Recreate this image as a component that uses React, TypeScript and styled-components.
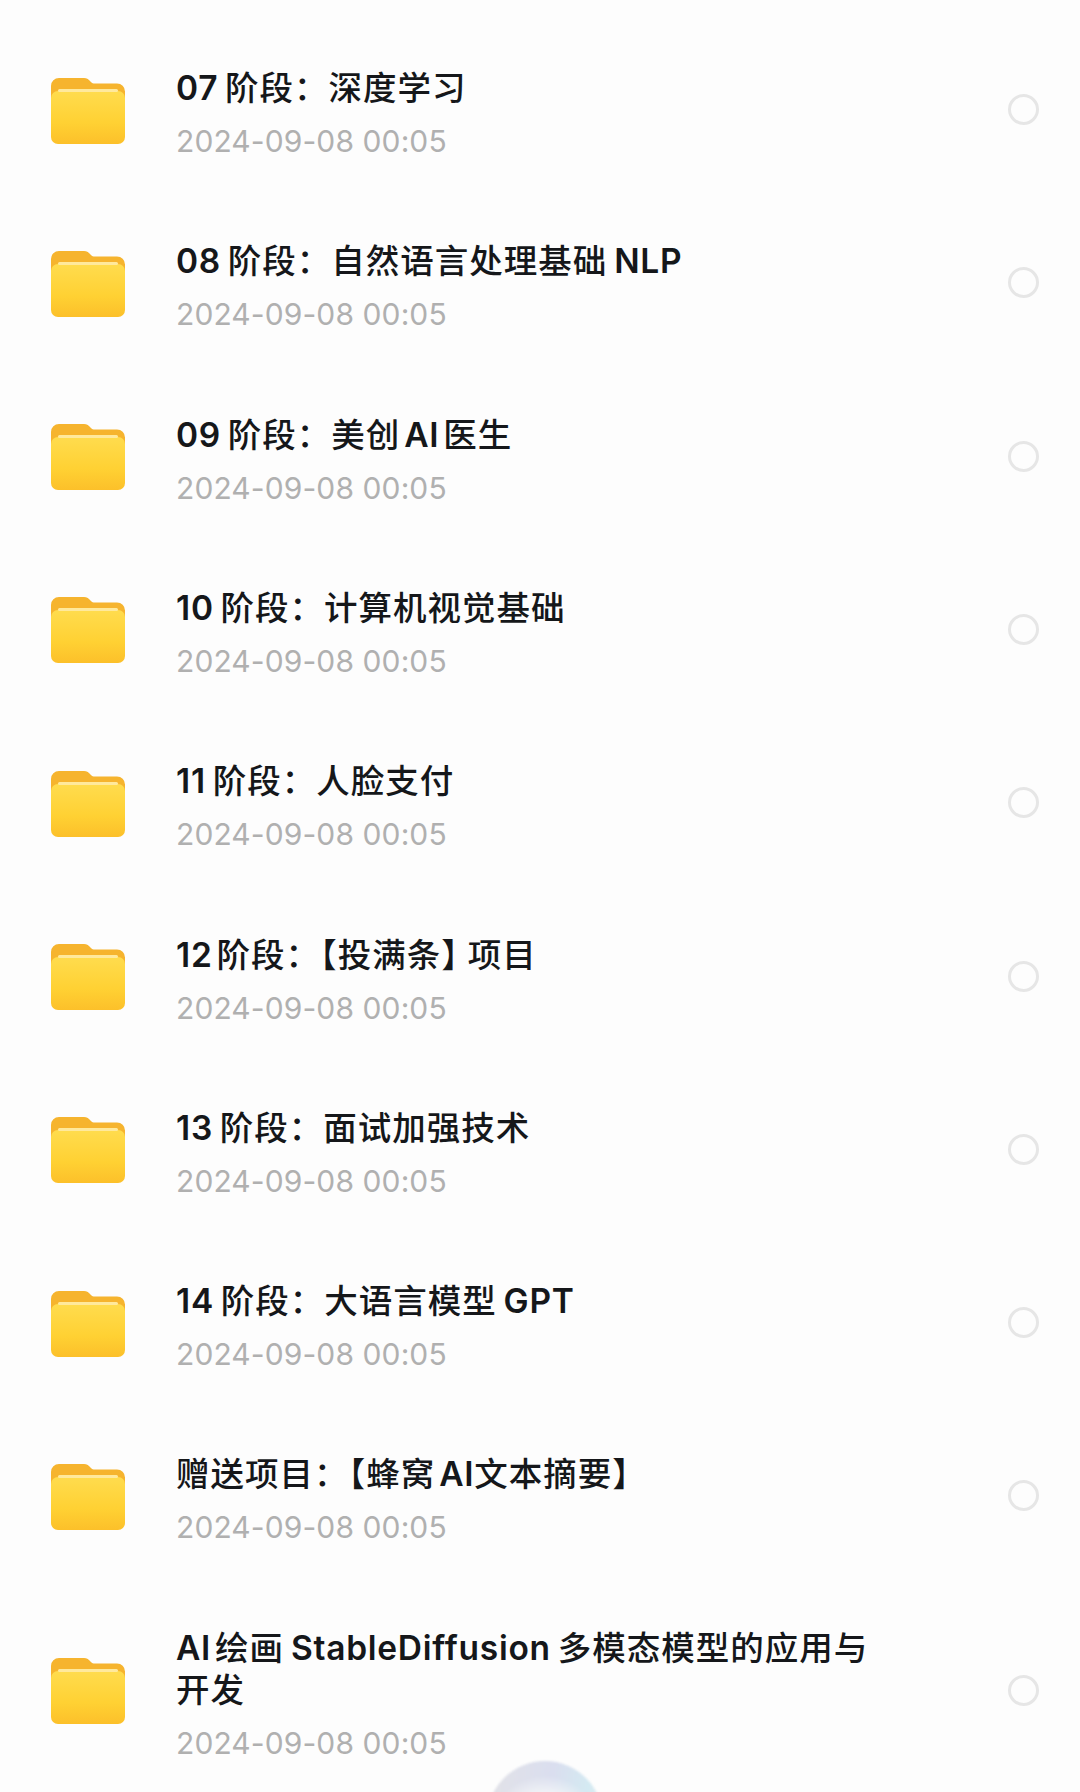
import React, { useId } from 'react';
import { createGlobalStyle, styled } from 'styled-components';

const GlobalStyle = createGlobalStyle`
  html, body {
    margin: 0;
    padding: 0;
    background: #fdfdfd;
  }
`;

const Page = styled.div`
  position: relative;
  width: 1080px;
  height: 1792px;
  overflow: hidden;
  padding-top: 23px;
  box-sizing: border-box;
  background: #fdfdfd;
  font-family: Inter, "Noto Sans CJK SC", sans-serif;
`;

const Row = styled.div`
  display: flex;
  align-items: center;
  padding: 37.15px 41px 37.15px 51px;
`;

const FolderSvg = styled.svg`
  flex: none;
  width: 74px;
  height: 66px;
  margin: 2px 51px 0 0;
`;

const Info = styled.div`
  flex: 1;
  padding-top: 7px;
`;

const Title = styled.div`
  font-size: 33.5px;
  line-height: 42px;
  font-weight: 500;
  letter-spacing: 1px;
  color: #15171a;
`;

const Latin = styled.span`
  font-weight: 600;
  letter-spacing: 0.75px;
`;

const CloseBracket = styled.span`
  letter-spacing: -7px;
`;

const Time = styled.div`
  margin-top: 14px;
  font-size: 30px;
  line-height: 36px;
  letter-spacing: 0.1px;
  color: #b0b0b0;
`;

const Radio = styled.div`
  flex: none;
  width: 25px;
  height: 25px;
  border: 3px solid #e6e6e6;
  border-radius: 50%;
`;

const FloatBall = styled.div`
  position: absolute;
  left: 487px;
  top: 1761px;
  width: 116px;
  height: 116px;
  border-radius: 50%;
  background:
    radial-gradient(circle at 50% 62%, #f6f8f9 0 38%, transparent 62%),
    linear-gradient(100deg, #e3e3e7 0%, #dadeef 50%, #d4eaf2 78%, #e8ecee 100%);
  filter: blur(1px);
`;

const Folder: React.FC = () => {
  const id = useId();
  return (
    <FolderSvg viewBox="0 0 74 66">
      <defs>
        <linearGradient id={id} x1="0" y1="0" x2="0" y2="1">
          <stop offset="0" stopColor="#ffdc4e" />
          <stop offset="0.6" stopColor="#ffd133" />
          <stop offset="1" stopColor="#fcc02a" />
        </linearGradient>
      </defs>
      <path
        d="M0 8a8 8 0 0 1 8-8h25c3 0 4 1 5.500 2.500l1.500 1.500c1 1 2 1.500 4 1.500h22a8 8 0 0 1 8 8V30H0z"
        fill="#f6b42e"
      />
      <rect x="0" y="13" width="74" height="53" rx="7" fill={`url(#${id})`} />
      <rect x="7" y="11" width="60" height="3" rx="1.500" fill="#ffe99c" />
    </FolderSvg>
  );
};

const items = [
  '07\u2009阶段\uFF1A深度学习',
  '08\u2009阶段\uFF1A自然语言处理基础\u2009NLP',
  '09\u2009阶段\uFF1A美创\u200AAI\u200A医生',
  '10\u2009阶段\uFF1A计算机视觉基础',
  '11\u2009阶段\uFF1A人脸支付',
  '12\u200A阶段\uFF1A【投满条】项目',
  '13\u2009阶段\uFF1A面试加强技术',
  '14\u2009阶段\uFF1A大语言模型\u2009GPT',
  '赠送项目\uFF1A【蜂窝\u200AAI文本摘要】',
  'AI\u200A绘画\u2009StableDiffusion\u2009多模态模型的应用与\n开发',
];

// digits and latin words are a little heavier than the chinese around them
const renderTitle = (title: string) =>
  title.split(/([A-Za-z0-9]+|】|\n)/).map((part, i) => {
    if (i % 2 === 0) return part;
    if (part === '\n') return <br key={i} />;
    if (part === '】') return <CloseBracket key={i}>{part}</CloseBracket>;
    return <Latin key={i}>{part}</Latin>;
  });

const App: React.FC = () => (
  <Page>
    <GlobalStyle />
    {items.map((title) => (
      <Row key={title}>
        <Folder />
        <Info>
          <Title>{renderTitle(title)}</Title>
          <Time>2024-09-08 00:05</Time>
        </Info>
        <Radio />
      </Row>
    ))}
    <FloatBall />
  </Page>
);

export default App;
